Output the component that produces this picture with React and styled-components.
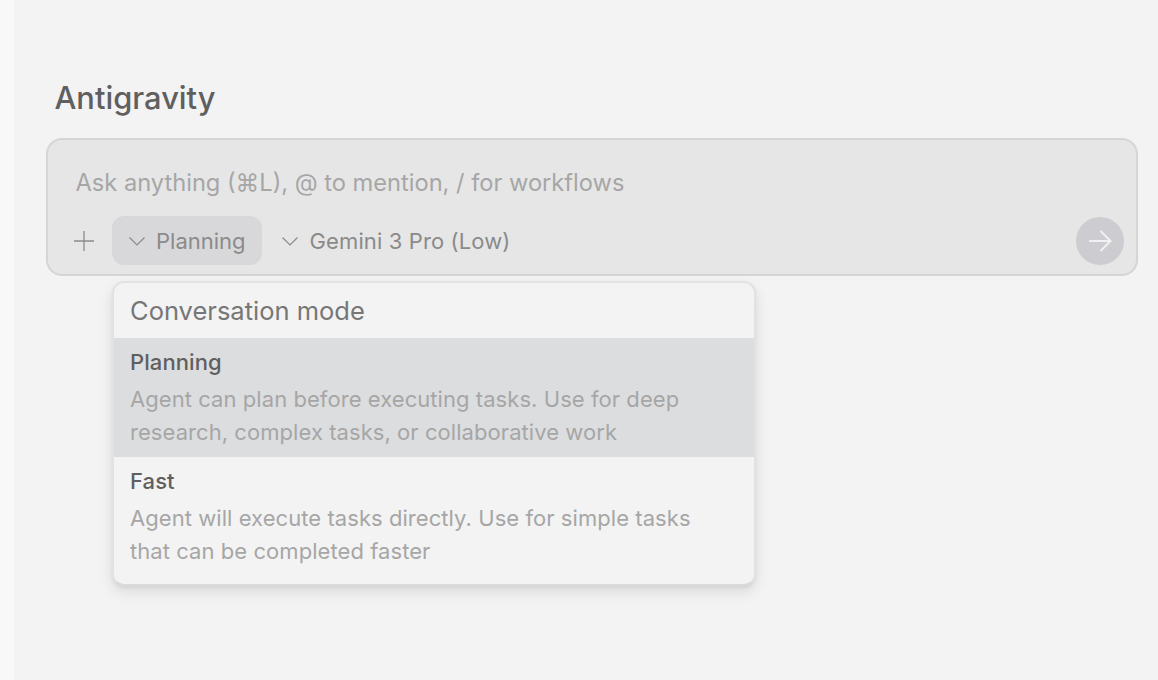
import React from 'react';
import styled, { createGlobalStyle } from 'styled-components';

const GlobalStyle = createGlobalStyle`
  html, body {
    margin: 0;
    padding: 0;
    height: 100%;
    background: #f8f8f8;
    overflow: hidden;
  }
  #root { height: 100%; }
`;

const ChevronDown = () => (
  <svg width="18" height="18" viewBox="0 0 18 18" fill="none" stroke="currentColor" strokeWidth="1.2">
    <path d="M1.5 5.5 L9 13 L16.5 5.5" />
  </svg>
);

const App = () => {
  return (
    <Page>
      <GlobalStyle />
      <Panel>
        <Title>Antigravity</Title>
        <Composer>
          <Placeholder>Ask anything (⌘L), @ to mention, / for workflows</Placeholder>
          <Toolbar>
            <PlusButton>
              <svg width="22" height="22" viewBox="0 0 22 22" fill="none" stroke="currentColor" strokeWidth="1.3">
                <path d="M11 1 V21 M1 11 H21" />
              </svg>
            </PlusButton>
            <Picker $active>
              <ChevronDown />
              Planning
            </Picker>
            <Picker $model>
              <ChevronDown />
              Gemini 3 Pro (Low)
            </Picker>
            <SendButton>
              <svg width="26" height="26" viewBox="0 0 26 26" fill="none" stroke="currentColor" strokeWidth="2">
                <path d="M2 13 H23 M13.5 3 L23.5 13 L13.5 23" />
              </svg>
            </SendButton>
          </Toolbar>
          <Menu>
            <MenuTitle>Conversation mode</MenuTitle>
            <MenuItem $selected>
              <ItemName>Planning</ItemName>
              <ItemText>Agent can plan before executing tasks. Use for deep research, complex tasks, or collaborative work</ItemText>
            </MenuItem>
            <MenuItem>
              <ItemName>Fast</ItemName>
              <ItemText>Agent will execute tasks directly. Use for simple tasks that can be completed faster</ItemText>
            </MenuItem>
          </Menu>
        </Composer>
      </Panel>
    </Page>
  );
};

const Page = styled.div`
  height: 100%;
  padding-left: 14px;
  box-sizing: border-box;
  font-family: Inter, "Liberation Sans", sans-serif;
`;

const Panel = styled.div`
  height: 100%;
  background: #f3f3f3;
  padding: 79px 20px 0 32px;
  box-sizing: border-box;
`;

const Title = styled.h1`
  margin: 0 0 22px 8.5px;
  font-size: 30.85px;
  line-height: 37px;
  font-weight: 500;
  color: #5f5f5f;
`;

const Composer = styled.div`
  position: relative;
  height: 138px;
  box-sizing: border-box;
  background: #e6e6e6;
  border: 2px solid #d5d5d5;
  border-radius: 16px;
  padding: 26px 12px 9px 25px;
  display: flex;
  flex-direction: column;
  justify-content: space-between;
`;

const Placeholder = styled.div`
  margin-left: 2.5px;
  font-size: 23.65px;
  line-height: 34px;
  color: #a6a6a6;
`;

const Toolbar = styled.div`
  display: flex;
  align-items: center;
`;

const PlusButton = styled.div`
  display: flex;
  color: #8c8c8c;
  margin-right: 17px;
`;

const Picker = styled.div`
  display: flex;
  align-items: center;
  gap: ${(p) => (p.$model ? '11px' : '10px')};
  height: 49px;
  padding: 0 16px;
  margin-left: ${(p) => (p.$model ? '3px' : '0')};
  border-radius: 12px;
  font-size: 22px;
  letter-spacing: ${(p) => (p.$model ? '0.12px' : '0')};
  color: #8a8a8a;
  background: ${(p) => (p.$active ? '#d8d8da' : 'transparent')};
`;

const SendButton = styled.div`
  margin-left: auto;
  width: 48px;
  height: 48px;
  border-radius: 50%;
  background: #cdcdd1;
  color: #f1f1f1;
  display: flex;
  align-items: center;
  justify-content: center;
`;

const Menu = styled.div`
  position: absolute;
  left: 64px;
  top: 141px;
  width: 644px;
  height: 305px;
  box-sizing: border-box;
  background: #f3f3f3;
  border: 2px solid #e2e2e2;
  border-bottom-color: #dadada;
  border-radius: 12px;
  box-shadow: 0 2px 3px rgba(0, 0, 0, 0.05), 0 6px 14px rgba(0, 0, 0, 0.1);
  overflow: hidden;
`;

const MenuTitle = styled.div`
  height: 55px;
  padding-left: 16px;
  font-size: 25.5px;
  line-height: 55px;
  color: #767676;
`;

const MenuItem = styled.div`
  height: 119px;
  box-sizing: border-box;
  padding: 9px 53px 0 16px;
  background: ${(p) => (p.$selected ? '#dcdddf' : 'transparent')};
`;

const ItemName = styled.div`
  font-size: 22px;
  line-height: 30px;
  font-weight: 500;
  letter-spacing: 0.1px;
  color: #5f5f5f;
`;

const ItemText = styled.div`
  margin-top: 6px;
  font-size: 22px;
  line-height: 33px;
  letter-spacing: 0.06px;
  color: #a6a6a6;
`;

export default App;
